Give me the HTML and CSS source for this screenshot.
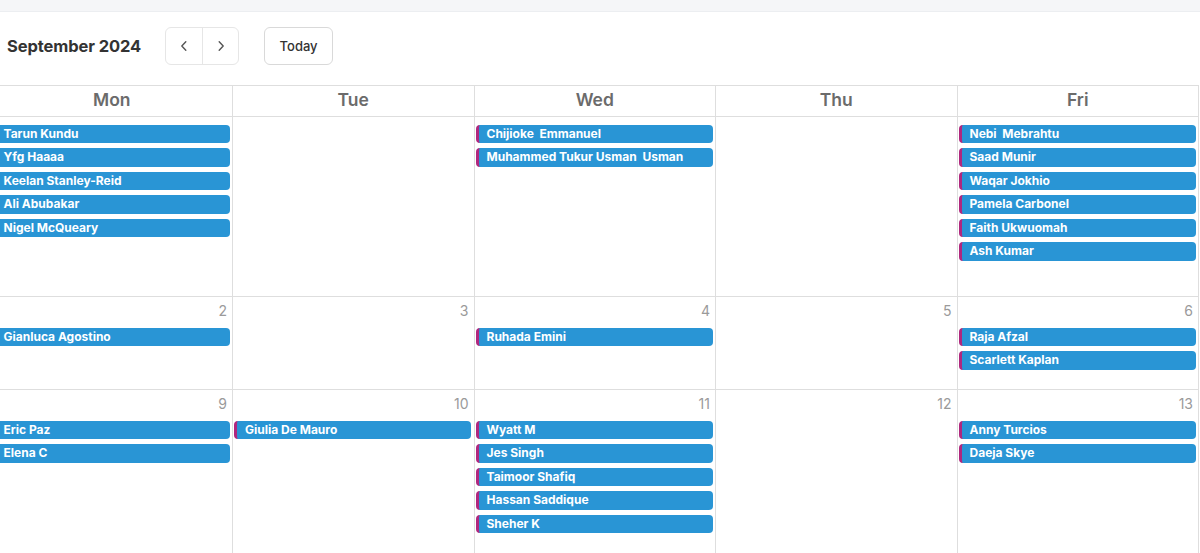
FILE: index.html
```html
<!DOCTYPE html>
<html>
<head>
<meta charset="utf-8">
<link rel="stylesheet" href="styles.css">
</head>
<body>
<div class="topbar"></div>
<div class="toolbar">
  <h1 class="title">September 2024</h1>
  <div class="nav">
    <button class="nav-btn" aria-label="Previous"><svg width="12" height="14" viewBox="0 0 12 14"><path d="M7.8 2.8L3.8 7l4 4.2" fill="none" stroke="#555" stroke-width="1.4" stroke-linecap="round" stroke-linejoin="round"/></svg></button>
    <button class="nav-btn" aria-label="Next"><svg width="12" height="14" viewBox="0 0 12 14"><path d="M4.2 2.8L8.2 7l-4 4.2" fill="none" stroke="#555" stroke-width="1.4" stroke-linecap="round" stroke-linejoin="round"/></svg></button>
  </div>
  <button class="today">Today</button>
</div>
<div class="calendar">
  <div class="head">Mon</div>
  <div class="head">Tue</div>
  <div class="head">Wed</div>
  <div class="head">Thu</div>
  <div class="head">Fri</div>

  <div class="cell first">
    <div class="ev">Tarun Kundu</div>
    <div class="ev">Yfg Haaaa</div>
    <div class="ev">Keelan Stanley-Reid</div>
    <div class="ev">Ali Abubakar</div>
    <div class="ev">Nigel McQueary</div>
  </div>
  <div class="cell first"></div>
  <div class="cell first">
    <div class="ev">Chijioke&nbsp; Emmanuel</div>
    <div class="ev">Muhammed Tukur Usman&nbsp; Usman</div>
  </div>
  <div class="cell first"></div>
  <div class="cell first">
    <div class="ev">Nebi&nbsp; Mebrahtu</div>
    <div class="ev">Saad Munir</div>
    <div class="ev">Waqar Jokhio</div>
    <div class="ev">Pamela Carbonel</div>
    <div class="ev">Faith Ukwuomah</div>
    <div class="ev">Ash Kumar</div>
  </div>

  <div class="cell week2"><div class="num">2</div>
    <div class="ev">Gianluca Agostino</div>
  </div>
  <div class="cell week2"><div class="num">3</div></div>
  <div class="cell week2"><div class="num">4</div>
    <div class="ev">Ruhada Emini</div>
  </div>
  <div class="cell week2"><div class="num">5</div></div>
  <div class="cell week2"><div class="num">6</div>
    <div class="ev">Raja Afzal</div>
    <div class="ev">Scarlett Kaplan</div>
  </div>

  <div class="cell week3"><div class="num">9</div>
    <div class="ev">Eric Paz</div>
    <div class="ev">Elena C</div>
  </div>
  <div class="cell week3"><div class="num">10</div>
    <div class="ev">Giulia De Mauro</div>
  </div>
  <div class="cell week3"><div class="num">11</div>
    <div class="ev">Wyatt M</div>
    <div class="ev">Jes Singh</div>
    <div class="ev">Taimoor Shafiq</div>
    <div class="ev">Hassan Saddique</div>
    <div class="ev">Sheher K</div>
  </div>
  <div class="cell week3"><div class="num">12</div></div>
  <div class="cell week3"><div class="num">13</div>
    <div class="ev">Anny Turcios</div>
    <div class="ev">Daeja Skye</div>
  </div>
</div>
</body>
</html>
```
FILE: styles.css
```css
* { box-sizing: border-box; }
html, body {
  margin: 0;
  padding: 0;
  background: #fff;
  overflow: hidden;
  height: 553px;
  font-family: Inter, "Liberation Sans", sans-serif;
}
.topbar {
  height: 12px;
  background: #f5f6f8;
  border-bottom: 1px solid #eceef1;
}
.toolbar {
  display: flex;
  align-items: center;
  padding: 15px 0 20px 7px;
  height: 73px;
}
.title {
  margin: 0 24px 0 0;
  font-size: 16.5px;
  font-weight: 700;
  color: #333;
  letter-spacing: -0.1px;
}
.nav {
  display: flex;
  height: 38px;
  border: 1px solid #e6e6e6;
  border-radius: 6px;
  margin-right: 25px;
}
.nav-btn {
  width: 36px;
  height: 36px;
  border: 0;
  background: transparent;
  display: flex;
  align-items: center;
  justify-content: center;
  padding: 0;
}
.nav-btn + .nav-btn { border-left: 1px solid #e6e6e6; }
.today {
  height: 38px;
  width: 69px;
  border: 1px solid #d9d9d9;
  border-radius: 6px;
  background: #fff;
  font-family: Inter, "Liberation Sans", sans-serif;
  font-size: 13px;
  font-weight: 500;
  color: #333;
  padding: 0;
}
.calendar {
  display: grid;
  grid-template-columns: repeat(5, 1fr);
  grid-template-rows: 31px 180px 93px 200px;
  margin-left: -8.5px;
  width: 1207.5px;
  border-top: 1px solid #dedede;
}
.head {
  border-right: 1px solid #dedede;
  border-bottom: 1px solid #dedede;
  text-align: center;
  font-size: 17.5px;
  font-weight: 600;
  color: #6b6b6b;
  line-height: 28px;
}
.cell {
  border-right: 1px solid #dedede;
  border-bottom: 1px solid #dedede;
  padding: 0 2.5px 0 1px;
  display: flex;
  flex-direction: column;
  gap: 5px;
}
.cell.first { padding-top: 7.5px; }
.cell.week2, .cell.week3 { padding-top: 6px; }
.num {
  text-align: right;
  font-size: 14px;
  line-height: 16px;
  color: #9a9a9a;
  padding-right: 2.5px;
  margin-bottom: 3.5px;
  font-weight: 400;
}
.ev {
  height: 18.5px;
  flex: none;
  background: #2995d5;
  border-left: 3px solid #b0277e;
  border-radius: 4px;
  color: #fff;
  font-size: 12px;
  font-weight: 700;
  line-height: 18.5px;
  padding-left: 8px;
  white-space: nowrap;
  overflow: hidden;
}
```
